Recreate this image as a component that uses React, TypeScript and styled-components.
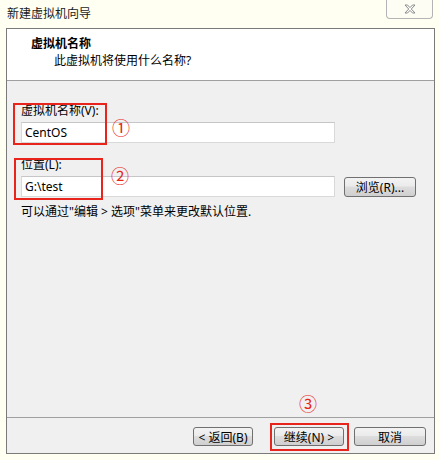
import React from "react";
import styled, { createGlobalStyle } from "styled-components";

const GlobalStyle = createGlobalStyle`
	html, body {
		margin: 0;
		padding: 0;
		background: #fffff2;
	}
	body {
		font-family: "Noto Sans", "Noto Sans CJK SC", sans-serif;
		font-size: 12px;
		color: #000000;
	}
`;

const Window = styled.div`
	position: relative;
	width: 439px;
	height: 460px;
	background: #fffff2;
	overflow: hidden;
`;

const TitleBar = styled.div`
	height: 28px;
	display: flex;
	justify-content: space-between;
	align-items: flex-start;
`;

const Title = styled.div`
	padding: 6px 0 0 7px;
	font-size: 12px;
	line-height: 16px;
	color: #1a1a1a;
`;

const CloseButton = styled.div`
	width: 45px;
	height: 18px;
	margin-right: 6px;
	border: 1px solid #b4b4b4;
	border-top: none;
	border-radius: 0 0 4px 4px;
	display: flex;
	align-items: center;
	justify-content: center;
	background: #fdfdf4;
`;

const Panel = styled.div`
	margin-left: 6px;
	width: 427px;
	height: 424px;
	border: 1px solid #7a7a7a;
	display: flex;
	flex-direction: column;
	background: #f0f0f0;
`;

const Header = styled.div`
	height: 52px;
	background: #ffffff;
	border-bottom: 1px solid #a0a0a0;
	padding: 7px 0 0 24px;
	box-sizing: border-box;
`;

const HeaderTitle = styled.div`
	font-weight: bold;
	font-size: 12px;
	line-height: 16px;
`;

const HeaderSub = styled.div`
	padding-left: 23px;
	font-size: 12px;
	line-height: 18px;
`;

const Body = styled.div`
	flex: 1;
	padding: 22px 0 0 14px;
	display: flex;
	flex-direction: column;
`;

const Label = styled.div<{ $top?: number }>`
	margin-top: ${p => p.$top ?? 0}px;
	line-height: 16px;
`;

const Row = styled.div`
	display: flex;
	align-items: center;
	gap: 9px;
	margin-top: 3px;
`;

const Input = styled.div`
	width: 314px;
	height: 21px;
	box-sizing: border-box;
	background: #ffffff;
	border: 1px solid #d9d9d9;
	border-top-color: #c6c6c6;
	padding-left: 3px;
	display: flex;
	align-items: center;
	font-size: 12px;
`;

const Hint = styled.div`
	margin-top: 7px;
	line-height: 16px;
`;

const Footer = styled.div`
	border-top: 1px solid #a0a0a0;
	padding: 9px 8px 7px 0;
	display: flex;
	justify-content: flex-end;
`;

const Button = styled.div<{ $w: number; $gap?: number }>`
	width: ${p => p.$w}px;
	height: 19px;
	margin-left: ${p => p.$gap ?? 0}px;
	box-sizing: border-box;
	border: 1px solid #707070;
	border-radius: 3px;
	background: linear-gradient(#f3f3f3 0%, #ebebeb 45%, #dddddd 50%, #cfcfcf 100%);
	display: flex;
	align-items: center;
	justify-content: center;
	font-size: 12px;
	color: #000000;
`;

const BrowseButton = styled(Button)`
	height: 20px;
`;

const Mark = styled.div<{ $x: number; $y: number; $w: number; $h: number }>`
	position: absolute;
	left: ${p => p.$x}px;
	top: ${p => p.$y}px;
	width: ${p => p.$w}px;
	height: ${p => p.$h}px;
	box-sizing: border-box;
	border: 2px solid #e8241c;
	pointer-events: none;
`;

const Num = styled.div<{ $x: number; $y: number }>`
	position: absolute;
	left: ${p => p.$x}px;
	top: ${p => p.$y}px;
	color: #e8241c;
	font-family: "Noto Sans CJK SC", sans-serif;
	font-size: 18px;
	line-height: 18px;
`;

const CloseIcon = () => (
	<svg width="12" height="10" viewBox="0 0 12 10">
		<path
			d="M1 1 L3.5 1 L6 3.6 L8.5 1 L11 1 L7.3 5 L11 9 L8.5 9 L6 6.4 L3.5 9 L1 9 L4.7 5 Z"
			fill="#ffffff"
			stroke="#8a8a8a"
			strokeWidth="1"
			strokeLinejoin="round"
		/>
	</svg>
);

export default function App() {
	return (
		<Window>
			<GlobalStyle />
			<TitleBar>
				<Title>新建虚拟机向导</Title>
				<CloseButton>
					<CloseIcon />
				</CloseButton>
			</TitleBar>
			<Panel>
				<Header>
					<HeaderTitle>虚拟机名称</HeaderTitle>
					<HeaderSub>此虚拟机将使用什么名称?</HeaderSub>
				</Header>
				<Body>
					<Label>虚拟机名称(V):</Label>
					<Row>
						<Input>CentOS</Input>
					</Row>
					<Label $top={14}>位置(L):</Label>
					<Row>
						<Input>G:\test</Input>
						<BrowseButton $w={72}>浏览(R)...</BrowseButton>
					</Row>
					<Hint>可以通过"编辑 &gt; 选项"菜单来更改默认位置.</Hint>
				</Body>
				<Footer>
					<Button $w={60}>&lt; 返回(B)</Button>
					<Button $w={70} $gap={21}>继续(N) &gt;</Button>
					<Button $w={72} $gap={10}>取消</Button>
				</Footer>
			</Panel>
			<Mark $x={13} $y={103} $w={94} $h={42} />
			<Mark $x={14} $y={158} $w={89} $h={42} />
			<Mark $x={270} $y={423} $w={79} $h={28} />
			<Num $x={112} $y={118}>①</Num>
			<Num $x={111} $y={166}>②</Num>
			<Num $x={299} $y={394}>③</Num>
		</Window>
	);
}
